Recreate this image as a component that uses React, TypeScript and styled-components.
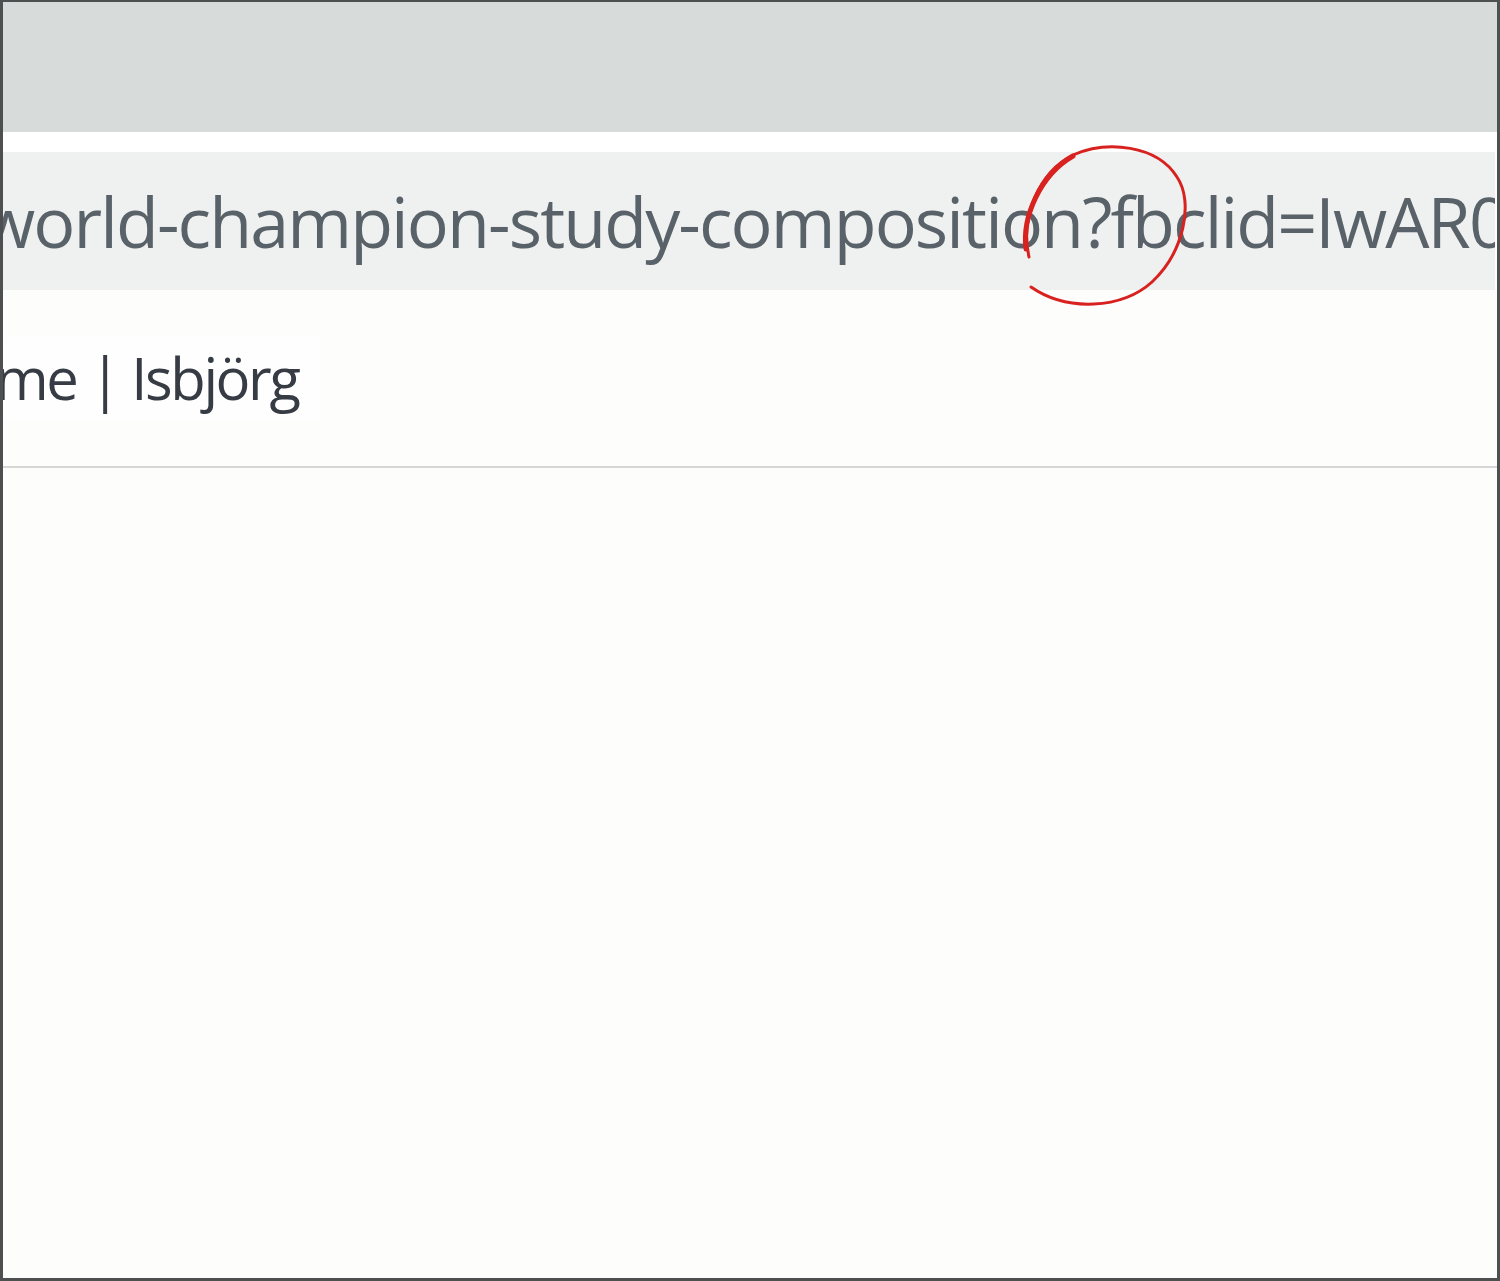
import React from "react";
import styled, { createGlobalStyle } from "styled-components";

const Global = createGlobalStyle`
  html, body {
    margin: 0;
    padding: 0;
    background: #fdfdfb;
  }
`;

const Frame = styled.div`
  position: relative;
  width: 1500px;
  height: 1281px;
  box-sizing: border-box;
  border-left: 3px solid #4d4f50;
  border-top: 2px solid #4d4f50;
  border-right: 3px solid #4d4f50;
  border-bottom: 3px solid #4d4f50;
  background: #fdfdfb;
  overflow: hidden;
  display: flex;
  flex-direction: column;
  font-family: "Open Sans", "Noto Sans", sans-serif;
`;

const TopBar = styled.div`
  height: 130px;
  background: #d7dcdb;
  flex-shrink: 0;
`;

const Gap = styled.div`
  height: 20px;
  background: #ffffff;
  flex-shrink: 0;
`;

const AddressBar = styled.div`
  height: 138px;
  margin-right: 2px;
  background: #eff1f0;
  display: flex;
  align-items: center;
  overflow: hidden;
  flex-shrink: 0;
`;

const Url = styled.span`
  white-space: nowrap;
  margin-left: -22px;
  font-size: 70px;
  color: #5a6269;
  letter-spacing: -1.9px;
  line-height: 1;
`;

const TitleRow = styled.div`
  height: 176px;
  border-bottom: 2px solid #d6d6d6;
  display: flex;
  align-items: center;
  overflow: hidden;
  flex-shrink: 0;
`;

const Title = styled.span`
  white-space: nowrap;
  margin-left: -8px;
  font-size: 58px;
  color: #363b44;
  letter-spacing: -2.4px;
  line-height: 1;
  padding: 12px 20px 12px 0;
  background: #fefefe;
`;

const Mark = styled.svg`
  position: absolute;
  left: 1004px;
  top: 135px;
  width: 196px;
  height: 185px;
  pointer-events: none;
`;

export default function App() {
  return (
    <>
      <Global />
      <Frame>
        <TopBar />
        <Gap />
        <AddressBar>
          <Url>world-champion-study-composition?fbclid=IwAR0</Url>
        </AddressBar>
        <TitleRow>
          <Title>me | Isbjörg</Title>
        </TitleRow>
        <Mark viewBox="0 0 196 185">
          <path
            d="M22 120 C13 80 32 35 66 18 C100 3 150 8 170 40 C187 65 177 115 145 145 C115 172 60 175 24 150"
            fill="none"
            stroke="#d8221f"
            strokeWidth="3"
            strokeLinecap="round"
          />
          <path
            d="M19 112 C15 80 33 38 66 19"
            fill="none"
            stroke="#d8221f"
            strokeWidth="5"
            strokeLinecap="round"
          />
        </Mark>
      </Frame>
    </>
  );
}
